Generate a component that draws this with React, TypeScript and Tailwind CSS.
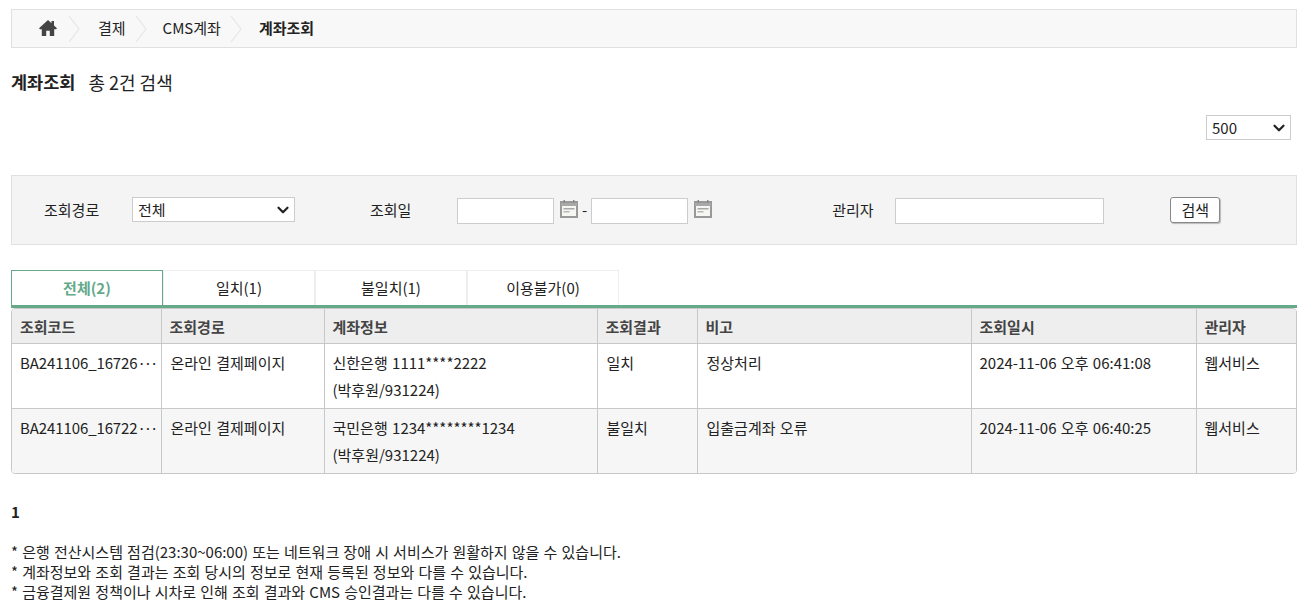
import React from 'react';
import { ChevronDown } from 'lucide-react';

const FONT = "font-['Noto_Sans_CJK_KR','Noto_Sans',sans-serif]";

const rows = [
  {
    code: 'BA241106_16726',
    path: '온라인 결제페이지',
    account: '신한은행 1111****2222',
    result: '일치',
    memo: '정상처리',
    date: '2024-11-06 오후 06:41:08',
  },
  {
    code: 'BA241106_16722',
    path: '온라인 결제페이지',
    account: '국민은행 1234********1234',
    result: '불일치',
    memo: '입출금계좌 오류',
    date: '2024-11-06 오후 06:40:25',
  },
];

const tabs = ['전체(2)', '일치(1)', '불일치(1)', '이용불가(0)'];
const heads = ['조회코드', '조회경로', '계좌정보', '조회결과', '비고', '조회일시', '관리자'];

function HomeIcon() {
  return (
    <svg width="18" height="16" viewBox="0 0 18 16" className="shrink-0">
      <path d="M9 0L12.5 3.2V1H15V5.5L18 8.3L17 9.3H15.2V16H10.8V10.8H7.2V16H2.8V9.3H1L0 8.3Z" fill="#444" />
    </svg>
  );
}

function Chevron() {
  return (
    <svg width="12" height="26" viewBox="0 0 12 26" fill="none" className="shrink-0">
      <path d="M1 0L11 13L1 26" stroke="#e6e6e6" strokeWidth="1.2" />
    </svg>
  );
}

function CalendarIcon() {
  return (
    <svg width="18" height="18" viewBox="0 0 18 18" className="shrink-0">
      <rect x="1" y="2" width="16" height="15" fill="#f6f6f2" stroke="#999" strokeWidth="2" />
      <rect x="1" y="3" width="16" height="3" fill="#a8a8a8" />
      <rect x="3.5" y="0" width="1.5" height="3" fill="#888" />
      <rect x="13" y="0" width="1.5" height="3" fill="#888" />
      <rect x="3.5" y="8" width="11" height="1.5" fill="#a8a8a8" />
      <rect x="3.5" y="11" width="6" height="1.5" fill="#b8b8b8" />
    </svg>
  );
}

function Select({ value, className }: { value: string; className: string }) {
  return (
    <div className={`relative ${className}`}>
      <select className="h-full w-full appearance-none rounded-none border border-[#ccc] bg-white pl-[5px] text-[15px] leading-none outline-none">
        <option>{value}</option>
      </select>
      <ChevronDown size={18} strokeWidth={3} color="#222" className="pointer-events-none absolute right-[3px] top-[4px]" />
    </div>
  );
}

export default function App() {
  return (
    <div className={`${FONT} h-[614px] w-[1299px] overflow-hidden bg-white pl-[11px] pr-[2px] pt-[9px] text-[15px] text-[#222]`}>
      {/* breadcrumb */}
      <div className="flex h-[39px] items-center border border-[#e0e0e0] bg-[#f8f8f8] pl-[27px]">
        <div className="mb-[2px]"><HomeIcon /></div>
        <div className="ml-[11px]"><Chevron /></div>
        <span className="ml-[18px] mr-[9px]">결제</span>
        <Chevron />
        <span className="ml-[16px] mr-[9px]">CMS계좌</span>
        <Chevron />
        <span className="ml-[17px] font-bold">계좌조회</span>
      </div>

      <div className="mt-[21px] flex h-[26px] items-center">
        <span className="text-[17.5px] font-bold">계좌조회</span>
        <span className="ml-[13px] text-[18px]">총 2건 검색</span>
      </div>

      <div className="mt-[20px] flex justify-end pr-[6px]">
        <Select value="500" className="h-[25px] w-[85px]" />
      </div>

      {/* search box */}
      <div className="mt-[35px] flex h-[70px] items-center border border-[#e0e0e0] bg-[#f4f4f4]">
        <span className="ml-[32px] w-[88px]">조회경로</span>
        <Select value="전체" className="mb-[1px] h-[25px] w-[163px]" />
        <span className="ml-[75px] w-[87px]">조회일</span>
        <input className="mt-[1px] h-[26px] w-[97px] border border-[#ccc] bg-white" />
        <div className="mb-[3px] ml-[6px]"><CalendarIcon /></div>
        <span className="mx-[4px]">-</span>
        <input className="mt-[1px] h-[26px] w-[97px] border border-[#ccc] bg-white" />
        <div className="mb-[3px] ml-[6px]"><CalendarIcon /></div>
        <span className="ml-[120px] w-[63px]">관리자</span>
        <input className="mt-[1px] h-[26px] w-[209px] border border-[#ccc] bg-white" />
        <button className="ml-[66px] h-[26px] w-[50px] rounded-[3px] border border-[#888] bg-white shadow-[1px_1px_1px_#bbb]">검색</button>
      </div>

      {/* tabs */}
      <div className="mt-[25px] flex border-b-[3px] border-[#63a98a]">
        {tabs.map((t, i) => (
          <div
            key={t}
            className={
              i === 0
                ? 'flex h-[35px] w-[152px] items-center justify-center border border-b-0 border-[#63a98a] font-bold text-[#63a98a]'
                : 'flex h-[35px] w-[152px] items-center justify-center border border-b-0 border-[#eee]'
            }
          >
            {t}
          </div>
        ))}
      </div>

      {/* table */}
      <div className="overflow-hidden rounded-[4px] border border-[#c8c8c8]">
        <table className="w-full table-fixed border-collapse [word-spacing:1px]">
          <colgroup>
            <col className="w-[149px]" />
            <col className="w-[163px]" />
            <col className="w-[273px]" />
            <col className="w-[100px]" />
            <col className="w-[274px]" />
            <col className="w-[225px]" />
            <col />
          </colgroup>
          <thead>
            <tr className="h-[34px] bg-[#eeeeee]">
              {heads.map((h, i) => (
                <th key={h} className={`border-b border-[#c8c8c8] pl-[8px] pt-[2px] text-left font-bold text-[#444] ${i < 6 ? 'border-r' : ''}`}>{h}</th>
              ))}
            </tr>
          </thead>
          <tbody>
            {rows.map((r, i) => (
              <tr key={r.code} className={i === 1 ? 'h-[65px] bg-[#f6f6f6]' : 'h-[65px] border-b border-[#c8c8c8] bg-white'}>
                <td className="border-r border-[#c8c8c8] pl-[8px] pt-[8px] align-top whitespace-nowrap">
                  <span className="tracking-[-0.1px]">{r.code}</span>
                  <span className="tracking-[-2.2px]">···</span>
                </td>
                <td className="border-r border-[#c8c8c8] pl-[9px] pt-[8px] align-top">{r.path}</td>
                <td className="border-r border-[#c8c8c8] pl-[8px] pt-[8px] align-top leading-[27px]">
                  <div className="-mt-[3px]">{r.account}</div>
                  <div>(박후원/931224)</div>
                </td>
                <td className="border-r border-[#c8c8c8] pl-[9px] pt-[8px] align-top">{r.result}</td>
                <td className="border-r border-[#c8c8c8] pl-[9px] pt-[8px] align-top">{r.memo}</td>
                <td className="border-r border-[#c8c8c8] pl-[8px] pt-[8px] align-top">{r.date}</td>
                <td className="pl-[8px] pt-[8px] align-top">웹서비스</td>
              </tr>
            ))}
          </tbody>
        </table>
      </div>

      <div className="mt-[28px] font-bold leading-[20px]">1</div>

      <div className="mt-[20px] leading-[20px] [word-spacing:0.8px]">
        <p>* 은행 전산시스템 점검(23:30~06:00) 또는 네트워크 장애 시 서비스가 원활하지 않을 수 있습니다.</p>
        <p>* 계좌정보와 조회 결과는 조회 당시의 정보로 현재 등록된 정보와 다를 수 있습니다.</p>
        <p>* 금융결제원 정책이나 시차로 인해 조회 결과와 CMS 승인결과는 다를 수 있습니다.</p>
      </div>
    </div>
  );
}
